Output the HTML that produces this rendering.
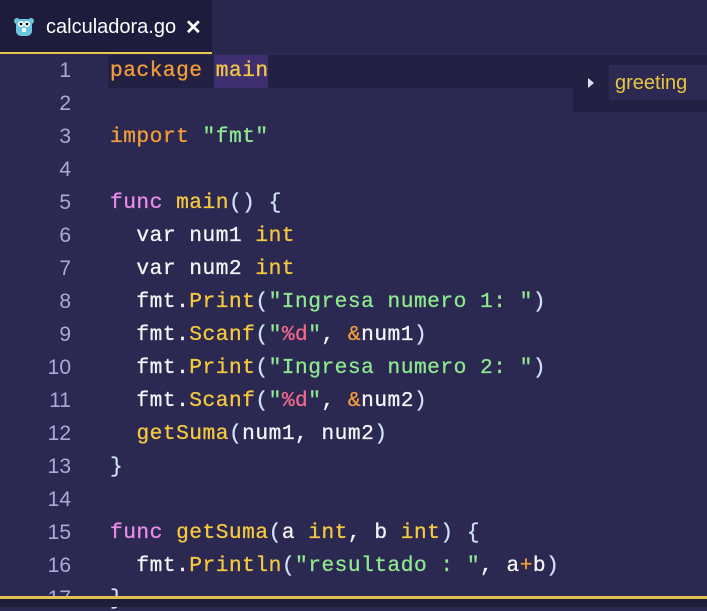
<!DOCTYPE html><html><head><style>
body{margin:0;width:707px;height:607px;overflow:hidden;background:#2b2951;font-family:"Liberation Mono",monospace;position:relative}
.tabbar{position:absolute;left:0;top:0;width:707px;height:53px;background:#29274e}
.tab{position:absolute;left:0;top:0;width:212px;height:52px;background:#1e1c3c;border-bottom:2px solid #e8c450}
.tab span{position:absolute;left:46px;top:16px;font:20px "Liberation Sans",sans-serif;color:#fff}
.tab b{position:absolute;left:185px;top:15px;font:bold 20px "Liberation Sans",sans-serif;color:#fff}
.ln{position:absolute;left:0;width:71px;text-align:right;color:#aba8dc;font-size:21px;font-family:"Liberation Sans",sans-serif}
.code{position:absolute;left:110px;font-size:21.2px;letter-spacing:0.5px;white-space:pre;color:#f4f4f8;-webkit-text-stroke:0.3px currentColor}
.k{color:#f29b3a}.y{color:#f5c93f}.p{color:#e88be6}.g{color:#8ee88e}.r{color:#f2688a}.b{color:#cfe0f5}
</style></head><body>
<div class="tabbar"><div class="tab">
<svg style="position:absolute;left:13px;top:16px" width="22" height="20" viewBox="0 0 22 20"><circle cx="4" cy="5" r="3" fill="#6ac6de"/><circle cx="18" cy="5" r="3" fill="#6ac6de"/><rect x="3" y="3" width="16" height="17" rx="5" fill="#6ac6de"/><circle cx="8" cy="8" r="3" fill="#fff"/><circle cx="14" cy="8" r="3" fill="#fff"/><circle cx="8" cy="8" r="1.3" fill="#000"/><circle cx="14" cy="8" r="1.3" fill="#000"/><rect x="9" y="12" width="4" height="4" fill="#fff"/></svg>
<span>calculadora.go</span><b>✕</b></div></div>
<div style="position:absolute;left:108px;top:55px;width:465px;height:33px;background:#232143"></div>
<div style="position:absolute;left:214px;top:55px;width:54px;height:33px;background:#3d2f70"></div>
<div style="position:absolute;left:573px;top:55px;width:134px;height:57px;background:#232143"></div>
<div style="position:absolute;left:609px;top:65px;width:98px;height:35px;background:#2c2a52"></div>
<div style="position:absolute;left:588px;top:78px;width:0;height:0;border-left:6px solid #dde;border-top:5px solid transparent;border-bottom:5px solid transparent"></div>
<div style="position:absolute;left:615px;top:72px;font:20px 'Liberation Sans',sans-serif;color:#e8c440">greeting</div>
<div id="c"></div>
<div style="position:absolute;left:0;top:596px;width:707px;height:3px;background:#e2c050"></div>
<div style="position:absolute;left:0;top:599px;width:707px;height:8px;background:#1f1d3a"></div>
<script>
var L=['<span class="k">package</span> <span class="y">main</span>','','<span class="k">import</span> <span class="g">"fmt"</span>','','<span class="p">func</span> <span class="y">main</span><span class="b">()</span> <span class="b">{</span>','  var num1 <span class="y">int</span>','  var num2 <span class="y">int</span>','  fmt.<span class="y">Print</span><span class="b">(</span><span class="g">"Ingresa numero 1: "</span><span class="b">)</span>','  fmt.<span class="y">Scanf</span><span class="b">(</span><span class="g">"</span><span class="r">%d</span><span class="g">"</span>, <span class="k">&amp;</span>num1<span class="b">)</span>','  fmt.<span class="y">Print</span><span class="b">(</span><span class="g">"Ingresa numero 2: "</span><span class="b">)</span>','  fmt.<span class="y">Scanf</span><span class="b">(</span><span class="g">"</span><span class="r">%d</span><span class="g">"</span>, <span class="k">&amp;</span>num2<span class="b">)</span>','  <span class="y">getSuma</span><span class="b">(</span>num1, num2<span class="b">)</span>','<span class="b">}</span>','','<span class="p">func</span> <span class="y">getSuma</span><span class="b">(</span>a <span class="y">int</span>, b <span class="y">int</span><span class="b">)</span> <span class="b">{</span>','  fmt.<span class="y">Println</span><span class="b">(</span><span class="g">"resultado : "</span>, a<span class="k">+</span>b<span class="b">)</span>','<span class="b">}</span>'];
var h='';for(var i=0;i<17;i++){var t=59+i*33;h+='<div class="ln" style="top:'+t+'px">'+(i+1)+'</div><div class="code" style="top:'+t+'px">'+L[i]+'</div>';}
document.getElementById('c').innerHTML=h;
</script>
</body></html>
